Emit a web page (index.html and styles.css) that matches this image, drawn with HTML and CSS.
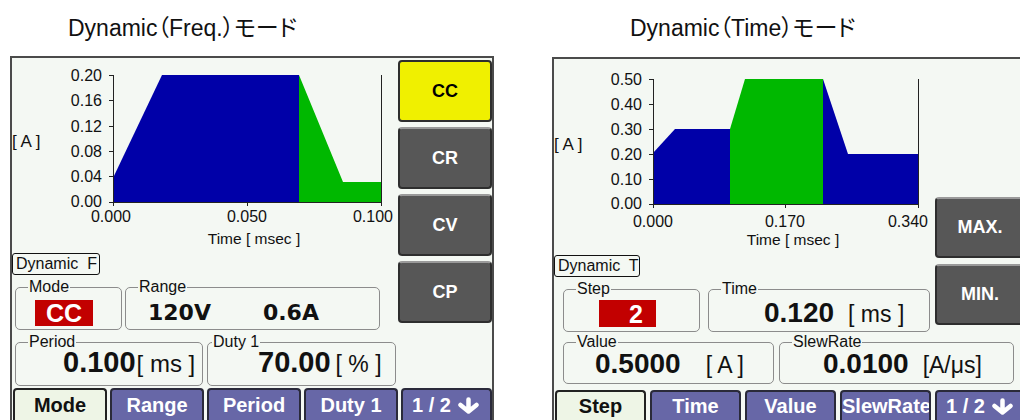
FILE: index.html
```html
<!DOCTYPE html>
<html lang="ja">
<head>
<meta charset="utf-8">
<title>Dynamic モード</title>
<link rel="stylesheet" href="styles.css">
</head>
<body>
<div class="page">
  <section class="fig fig-freq">
    <h2 class="fig-title">Dynamic（Freq.）モード</h2>
    <div class="screen screen-freq">
      <div class="main">
        <svg class="chart" width="384" height="192" viewBox="0 0 384 192">
          <polygon fill="#0000a8" points="101,120 150,17 287,17 287,144 101,144"/>
          <polygon fill="#00b800" points="287,17 331,124 369,124 369,144 287,144"/>
          <g stroke="#222" stroke-width="1">
            <line x1="101.5" y1="17" x2="101.5" y2="148"/>
            <line x1="101" y1="144.5" x2="370" y2="144.5"/>
            <line x1="369.5" y1="17" x2="369.5" y2="148"/>
            <line x1="235.5" y1="144" x2="235.5" y2="148"/>
            <line x1="97" y1="17.5" x2="101" y2="17.5"/>
            <line x1="97" y1="42.5" x2="101" y2="42.5"/>
            <line x1="97" y1="68.5" x2="101" y2="68.5"/>
            <line x1="97" y1="93.5" x2="101" y2="93.5"/>
            <line x1="97" y1="118.5" x2="101" y2="118.5"/>
            <line x1="97" y1="144.5" x2="101" y2="144.5"/>
          </g>
          <g class="ax" text-anchor="end">
            <text x="90" y="23">0.20</text>
            <text x="90" y="48">0.16</text>
            <text x="90" y="74">0.12</text>
            <text x="90" y="99">0.08</text>
            <text x="90" y="124">0.04</text>
            <text x="90" y="149">0.00</text>
          </g>
          <g class="ax" text-anchor="middle">
            <text x="99" y="164">0.000</text>
            <text x="235" y="164">0.050</text>
          </g>
          <text class="ax" x="381" y="164" text-anchor="end">0.100</text>
          <text class="ax-t" x="242" y="186" text-anchor="middle">Time [ msec ]</text>
          <text class="ax-a" x="0" y="89">[ A ]</text>
        </svg>
        <div class="mode-tag">Dynamic&nbsp; F</div>
        <div class="row row-a">
          <fieldset class="fs w-mode">
            <legend>Mode</legend>
            <div class="val pl-mode"><span class="red red-cc">CC</span></div>
          </fieldset>
          <fieldset class="fs w-range">
            <legend>Range</legend>
            <div class="val val-range"><b>120V</b><b>0.6A</b></div>
          </fieldset>
        </div>
        <div class="row row-b">
          <fieldset class="fs w-period">
            <legend>Period</legend>
            <div class="val big pl-period"><span class="num">0.100</span><span class="unit unit-lg">[ ms ]</span></div>
          </fieldset>
          <fieldset class="fs w-duty">
            <legend class="lg-near">Duty 1</legend>
            <div class="val big pl-duty"><span class="num">70.00</span><span class="unit">[ % ]</span></div>
          </fieldset>
        </div>
      </div>
      <div class="keys">
        <div class="key key-on">CC</div>
        <div class="key">CR</div>
        <div class="key">CV</div>
        <div class="key">CP</div>
      </div>
      <div class="tabs">
        <div class="tab tab-on">Mode</div>
        <div class="tab">Range</div>
        <div class="tab">Period</div>
        <div class="tab">Duty 1</div>
        <div class="tab tab-page">1 / 2<svg class="arrow" width="25" height="17" viewBox="0 0 25 17"><path d="M12.5 2.5V14M4.5 8L12.5 14.5L20.5 8" fill="none" stroke="#fff" stroke-width="4.5" stroke-linecap="round" stroke-linejoin="round"/></svg></div>
      </div>
    </div>
  </section>

  <section class="fig fig-time">
    <h2 class="fig-title">Dynamic（Time）モード</h2>
    <div class="screen screen-time">
      <div class="main">
        <svg class="chart" width="381" height="192" viewBox="0 0 381 192">
          <polygon fill="#0000a8" points="99,94 121,70 176,70 176,145 99,145"/>
          <polygon fill="#00b800" points="176,70 191,20 269,20 269,145 176,145"/>
          <polygon fill="#0000a8" points="269,20 294,95 364,95 364,145 269,145"/>
          <g stroke="#222" stroke-width="1">
            <line x1="99.5" y1="20" x2="99.5" y2="149"/>
            <line x1="99" y1="145.5" x2="365" y2="145.5"/>
            <line x1="364.5" y1="20" x2="364.5" y2="149"/>
            <line x1="231.5" y1="145" x2="231.5" y2="149"/>
            <line x1="95" y1="20.5" x2="99" y2="20.5"/>
            <line x1="95" y1="45.5" x2="99" y2="45.5"/>
            <line x1="95" y1="70.5" x2="99" y2="70.5"/>
            <line x1="95" y1="95.5" x2="99" y2="95.5"/>
            <line x1="95" y1="120.5" x2="99" y2="120.5"/>
            <line x1="95" y1="145.5" x2="99" y2="145.5"/>
          </g>
          <g class="ax" text-anchor="end">
            <text x="88" y="26">0.50</text>
            <text x="88" y="51">0.40</text>
            <text x="88" y="76">0.30</text>
            <text x="88" y="101">0.20</text>
            <text x="88" y="126">0.10</text>
            <text x="88" y="150">0.00</text>
          </g>
          <g class="ax" text-anchor="middle">
            <text x="99" y="168">0.000</text>
            <text x="231" y="168">0.170</text>
          </g>
          <text class="ax" x="374" y="168" text-anchor="end">0.340</text>
          <text class="ax-t" x="239" y="186" text-anchor="middle">Time [ msec ]</text>
          <text class="ax-a" x="0" y="91">[ A ]</text>
        </svg>
        <div class="mode-tag tag-t">Dynamic&nbsp; T</div>
        <div class="row row-c">
          <fieldset class="fs w-step">
            <legend>Step</legend>
            <div class="val pl-step"><span class="red red-step">2</span></div>
          </fieldset>
          <fieldset class="fs w-time">
            <legend>Time</legend>
            <div class="val big-t pl-time"><span class="num num-t">0.120</span><span class="unit">[ ms ]</span></div>
          </fieldset>
        </div>
      </div>
      <div class="keys keys-t">
        <div class="key key-t">MAX.</div>
        <div class="key key-t">MIN.</div>
      </div>
      <div class="row row-d">
        <fieldset class="fs w-value">
          <legend>Value</legend>
          <div class="val big-v pl-value"><span class="num num-t">0.5000</span><span class="unit">[ A ]</span></div>
        </fieldset>
        <fieldset class="fs w-slew">
          <legend>SlewRate</legend>
          <div class="val big-v pl-slew"><span class="num num-t">0.0100</span><span class="unit">[A/μs]</span></div>
        </fieldset>
      </div>
      <div class="tabs tabs-t">
        <div class="tab tab-on">Step</div>
        <div class="tab">Time</div>
        <div class="tab">Value</div>
        <div class="tab">SlewRate</div>
        <div class="tab tab-page">1 / 2<svg class="arrow" width="25" height="17" viewBox="0 0 25 17"><path d="M12.5 2.5V14M4.5 8L12.5 14.5L20.5 8" fill="none" stroke="#fff" stroke-width="4.5" stroke-linecap="round" stroke-linejoin="round"/></svg></div>
      </div>
    </div>
  </section>
</div>
</body>
</html>
```
FILE: styles.css
```css
html, body {
  margin: 0;
  padding: 0;
  background: #fff;
}
body {
  width: 1020px;
  height: 420px;
  overflow: hidden;
  font-family: "Liberation Sans", Arial, "Noto Sans CJK JP", sans-serif;
  color: #111;
}
.page {
  display: flex;
  align-items: flex-start;
  height: 420px;
  overflow: hidden;
}
.fig {
  flex: none;
  height: 420px;
  overflow: hidden;
}
.fig-freq {
  width: 540px;
}
.fig-time {
  width: 480px;
}
.fig-title {
  margin: 0;
  height: 56px;
  box-sizing: border-box;
  padding-top: 17px;
  font-family: "Liberation Sans", "Noto Sans CJK JP", sans-serif;
  font-feature-settings: "palt";
  font-weight: normal;
  font-size: 23px;
  line-height: 23px;
  color: #111;
  white-space: nowrap;
}
.fig-freq .fig-title { padding-left: 68px; }
.fig-time .fig-title { padding-left: 90px; }

.screen {
  display: grid;
  width: 484px;
  box-sizing: border-box;
  background: #f4f8f3;
  border-top: 2px solid #4b4b4b;
  border-left: 2px solid #4b4b4b;
  border-right: 2px solid #4b4b4b;
}
.screen-freq {
  margin-left: 10px;
  height: 364px;
  grid-template-columns: 384px 1fr;
  grid-template-rows: auto 1fr;
  grid-template-areas:
    "main keys"
    "tabs tabs";
}
.screen-time {
  margin-left: 12px;
  margin-top: 1px;
  width: 468px;
  border-right: none;
  height: 363px;
  grid-template-columns: 381px 1fr;
  grid-template-rows: auto auto 1fr;
  grid-template-areas:
    "main keys"
    "rowd rowd"
    "tabs tabs";
}
.main {
  grid-area: main;
  display: flex;
  flex-direction: column;
}
.chart {
  display: block;
}
.ax {
  font-family: "Liberation Sans", Arial, sans-serif;
  font-size: 16px;
  fill: #111;
}
.ax-t {
  font-family: "Liberation Sans", Arial, sans-serif;
  font-size: 15.5px;
  fill: #111;
}
.ax-a {
  font-family: "Liberation Sans", Arial, sans-serif;
  font-size: 17px;
  fill: #111;
}

.mode-tag {
  margin-top: 3px;
  width: 88px;
  height: 22px;
  box-sizing: border-box;
  border: 1px solid #111;
  border-radius: 3px;
  padding-left: 3px;
  font-size: 16px;
  line-height: 20px;
  white-space: nowrap;
}
.tag-t {
  margin-top: 4px;
  width: 86px;
}

.row {
  display: flex;
}
.row-a {
  margin-top: 4px;
  padding-left: 3px;
  gap: 3px;
}
.row-a .fs { height: 51px; }
.row-b {
  margin-top: 4px;
  padding-left: 3px;
  gap: 4px;
}
.row-b .fs { height: 52px; }
.row-c {
  margin-top: 4px;
  padding-left: 9px;
  gap: 8px;
}
.row-c .fs { height: 51px; }
.row-d {
  grid-area: rowd;
  margin-top: 2px;
  padding-left: 9px;
  gap: 5px;
}
.row-d .fs { height: 50px; }

.fs {
  margin: 0;
  padding: 0;
  box-sizing: border-box;
  min-width: 0;
  border: 1px solid #8c8c8c;
  border-radius: 5px;
}
.fs legend {
  margin-left: 12px;
  padding: 0 1px;
  font-size: 16px;
  line-height: 16px;
  color: #111;
}
.fs legend.lg-near {
  margin-left: 4px;
}
.w-mode { width: 107px; }
.w-range { width: 255px; }
.w-period { width: 189px; }
.w-duty { width: 190px; }
.w-step { width: 137px; }
.w-time { width: 222px; }
.w-value { width: 211px; }
.w-slew { width: 235px; }

.val {
  display: flex;
  align-items: baseline;
  white-space: nowrap;
}
.red {
  display: block;
  background: #c20000;
  color: #fff;
  font-weight: bold;
  font-size: 25px;
}
.red-cc {
  margin-top: 5px;
  width: 58px;
  height: 26px;
  line-height: 27px;
  text-align: center;
}
.red-step {
  margin-top: 3px;
  width: 57px;
  height: 27px;
  line-height: 28px;
  text-align: right;
  padding-right: 13px;
  box-sizing: border-box;
}
.pl-mode { padding-left: 19px; }
.pl-step { padding-left: 35px; }

.val-range {
  margin-top: 5px;
  padding-left: 22px;
  height: 26px;
  line-height: 26px;
  font-family: "DejaVu Sans", sans-serif;
  font-weight: bold;
  font-size: 22px;
  gap: 52px;
}
.big {
  line-height: 24px;
}
.big-t {
  line-height: 31px;
}
.big-v {
  line-height: 27px;
}
.num {
  font-weight: bold;
  font-size: 29px;
}
.num-t {
  font-size: 28px;
}
.unit {
  font-size: 23px;
}
.unit-lg {
  font-size: 24px;
}
.pl-period { padding-left: 47px; gap: 1px; }
.pl-duty { padding-left: 50px; gap: 5px; }
.pl-time { padding-left: 55px; gap: 14px; }
.pl-value { padding-left: 31px; gap: 25px; }
.pl-slew { padding-left: 43px; gap: 14px; }

.keys {
  grid-area: keys;
  display: flex;
  flex-direction: column;
  gap: 5px;
  padding-top: 2px;
  margin-left: 2px;
}
.key {
  height: 62px;
  box-sizing: border-box;
  border: 2px solid #2e2e2e;
  border-top-color: #9a9a9a;
  border-radius: 4px;
  background: #575757;
  color: #fff;
  font-weight: bold;
  font-size: 18px;
  line-height: 58px;
  text-align: center;
}
.key-on {
  background: #f0f000;
  color: #000;
  border-color: #2e2e2e;
}
.keys-t {
  align-self: end;
  gap: 6px;
  padding-top: 0;
  padding-bottom: 7px;
  margin-left: 0;
  width: 90px;
}
.key-t {
  height: 61px;
  line-height: 57px;
}

.tabs {
  grid-area: tabs;
  display: flex;
  gap: 3px;
  margin-top: 2px;
  padding-left: 1px;
  overflow: hidden;
}
.tabs-t {
  margin-top: 6px;
  gap: 4px;
}
.tab {
  flex: none;
  width: 94px;
  box-sizing: border-box;
  border: 2px solid #2a2a3a;
  border-bottom: none;
  border-radius: 4px 4px 0 0;
  background: #6767a7;
  color: #fff;
  font-weight: bold;
  font-size: 20px;
  line-height: 30px;
  text-align: center;
  white-space: nowrap;
  overflow: hidden;
}
.tabs-t .tab {
  width: 91px;
  line-height: 29px;
}
.tab-on {
  background: #eef5e6;
  color: #111;
  border-color: #222;
}
.tab-page {
  flex: 1;
  display: flex;
  justify-content: center;
  align-items: center;
  gap: 5px;
}
.tabs-t .tab-page {
  flex: none;
}
.arrow {
  display: block;
}
```
